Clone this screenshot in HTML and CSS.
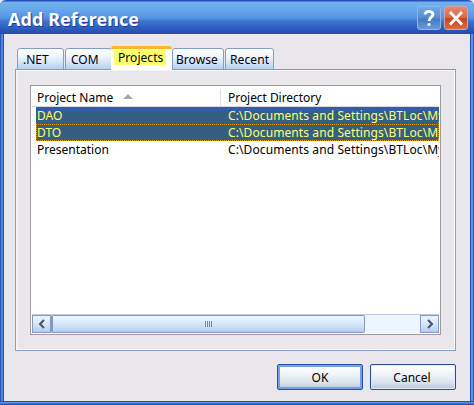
FILE: index.html
```html
<!DOCTYPE html>
<html lang="en">
<head>
<meta charset="utf-8">
<title>Add Reference</title>
<link rel="stylesheet" href="styles.css">
</head>
<body>
<main class="window">
  <header class="titlebar">
    <h1>Add Reference</h1>
    <button class="caption help" aria-label="Help"><svg width="22" height="22" viewBox="0 0 22 22"><path d="M7 7.5C7 3.2 15 3.2 15 7.5C15 10.2 11 10 11 14" /><path d="M11 16.2V18.7"/></svg></button>
    <button class="caption close" aria-label="Close"><svg width="22" height="22" viewBox="0 0 22 22"><path d="M5 5L17 17.5M17 5L5 17.5"/></svg></button>
  </header>
  <section class="content">
    <nav class="tabs">
      <div class="tab net"><span>.NET</span></div>
      <div class="tab com"><span>COM</span></div>
      <div class="tab active"><span>Projects</span></div>
      <div class="tab browse"><span>Browse</span></div>
      <div class="tab recent"><span>Recent</span></div>
    </nav>
    <div class="panel">
      <div class="list">
        <div class="row head"><div class="name"><span>Project Name</span><i class="sort"></i></div><div class="path dir">Project Directory</div></div>
        <div class="row selected"><div class="name">DAO</div><div class="path">C:\Documents and Settings\BTLoc\My</div></div>
        <div class="row selected focused"><div class="name">DTO</div><div class="path">C:\Documents and Settings\BTLoc\My</div></div>
        <div class="row"><div class="name">Presentation</div><div class="path">C:\Documents and Settings\BTLoc\My</div></div>
        <div class="blank"></div>
        <div class="scrollbar">
          <div class="arrow"><svg width="8" height="10" viewBox="0 0 8 10"><path d="M6 1L2 5L6 9"/></svg></div>
          <div class="thumb"><i></i><i></i><i></i><i></i></div>
          <div class="track"></div>
          <div class="arrow"><svg width="8" height="10" viewBox="0 0 8 10"><path d="M2 1L6 5L2 9"/></svg></div>
        </div>
      </div>
    </div>
    <footer class="actions">
      <button class="button default">OK</button>
      <button class="button">Cancel</button>
    </footer>
  </section>
</main>
</body>
</html>
```
FILE: styles.css
```css
* { box-sizing: border-box; }
body { margin: 0; background: #e9e7ec; overflow: hidden; }
button { font: inherit; padding: 0; }
.window {
  width: 474px; height: 405px; display: flex; flex-direction: column;
  font: 12px/17px "Noto Sans", sans-serif; color: #000;
  background: linear-gradient(90deg, #2957b7 0 1px, #4b87de 1px 3px, #2450b5 3px 4px, transparent 4px 470px, #2450b5 470px 471px, #5b94e5 471px 473px, #2957b7 473px), #e9e7ec;
  border-radius: 6px 6px 0 0;
  overflow: hidden;
}
.titlebar {
  height: 34px; flex: none; display: flex; align-items: flex-start; padding: 6px 6px 0 8px;
  background: linear-gradient(#294fbb 0 1px, #70b1ed 2px, #6aabeb 8px, #5593e3 18px, #3b78d1 21px, #2c5abd 29px, #2849ae 34px);
}
h1 {
  margin: 0 auto 0 0; color: #fff; font: bold 18px/27px "Noto Sans", sans-serif;
  letter-spacing: .06px; text-shadow: 1px 1px #193a91; white-space: nowrap;
}
.caption { width: 24px; height: 24px; border: 1px solid #8cb7ed; border-radius: 3px; margin-left: 3px; }
.caption svg { display: block; fill: none; stroke: #fff; stroke-width: 2.8; }
.help { background: linear-gradient(#70a9e6, #528bd2 50%, #4378c3 55%, #699bdc); }
.close { background: linear-gradient(#e28b71, #db6844 48%, #cb431e 53%, #da6c42); border-color: #d3a3a8; }
.content { flex: 1; margin: 0 4px; padding: 12px 14px 0 11px; }
.window::after { content: ""; flex: none; height: 4px; background: linear-gradient(#254eaa 1px, #5b94e5 1px 2px, #3974d2 2px 3px, #2957b7 3px); }
.tabs { display: flex; align-items: flex-end; height: 24px; padding-left: 2px; margin-bottom: -1px; position: relative; }
.tab {
  height: 22px; border: 1px solid #859fc4; border-radius: 3px 3px 0 0; padding: 2px 0 0 5px; white-space: nowrap;
  background: linear-gradient(#fff, #edf5ff 40%, #b9cef0);
}
.net { width: 47px; margin-right: 1px; }
.com { width: 47px; }
.browse { width: 52px; margin-right: 1px; padding-left: 3px; letter-spacing: .05px; }
.recent { width: 49px; padding-left: 4px; letter-spacing: .1px; }
.active { width: 61px; height: 24px; margin-left: -1px; padding: 1px 0 0 3px; background: #fff; border: 0; border-top: 3px solid #ffb52b; }
.active span { display: block; width: 52px; height: 15px; line-height: 15px; padding-left: 4px; background: #ffff70; letter-spacing: .05px; }
.panel { width: 441px; height: 282px; padding: 14px 12px 14px 14px; border: 1px solid #899fbd; border-top-color: #7f99bd; box-shadow: inset -1px -1px #fff, inset 2px 1px #f5f4f8; }
.list { width: 411px; height: 250px; margin-top: 1px; border: 1px solid #9b9aa0; background: #fff; overflow: hidden; display: flex; flex-direction: column; }
.row { height: 17px; flex: none; display: grid; grid-template-columns: 185px 1fr; margin: 0 1px 0 5px; white-space: nowrap; overflow: hidden; }
.name { padding-left: 1px; }
.path { padding-left: 7px; letter-spacing: .1px; overflow: hidden; }
.dir { letter-spacing: -.05px; }
.head { height: 21px; margin-left: 1px; padding-left: 4px; padding-top: 3px; border-bottom: 1px solid #d9d8de; }
.head .name { display: flex; align-items: center; height: 17px; border-right: 1px solid #dfdee3; }
.sort { width: 0; height: 0; border: solid transparent; border-width: 0 5px 5px; border-bottom-color: #a8a7aa; margin-left: 10px; margin-top: -3px; }
.selected { background: #365e80; color: #ffff73; }
.head + .selected { background: linear-gradient(#315dad 4px, #365e80 4px); }
.focused { outline: 1px dotted #e99c18; outline-offset: -1px; }
.blank { flex: 1; }
.scrollbar { height: 19px; flex: none; margin: 0 1px 1px; display: flex; background: #edf5ff; border-top: 1px solid #bdcce5; }
.arrow, .thumb { border: 1px solid #839ac1; background: linear-gradient(#edf5ff, #dceaff 40%, #b6cced); }
.arrow { width: 19px; flex: none; display: grid; place-items: center; }
.arrow svg { fill: none; stroke: #48516a; stroke-width: 2; }
.thumb { width: 314px; display: flex; gap: 1px; align-items: center; justify-content: center; border-left-width: 2px; border-radius: 2px; }
.thumb i { width: 1px; height: 6px; background: #7e8793; }
.track { flex: 1; }
.actions { display: flex; justify-content: flex-end; gap: 7px; margin: 13px 0 0 0; }
.button { width: 86px; height: 26px; border: 1px solid #284e96; border-radius: 2px; background: linear-gradient(#fff, #f5f8fb 30%, #d8e2eb 75%, #b4c5d9); box-shadow: inset 0 0 0 1px #e0eafa; color: #000; padding-right: 2px; }
.default { border-color: #2451b2; box-shadow: inset 0 0 0 2px #779ee4; padding-right: 0; }
```
